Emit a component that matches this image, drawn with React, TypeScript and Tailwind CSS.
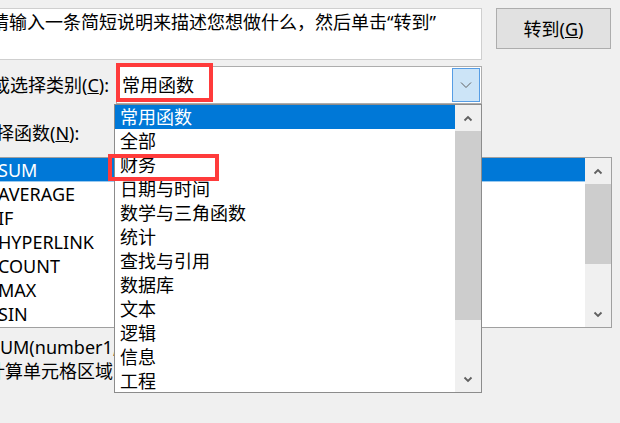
import React from "react";

const categories = [
  "常用函数",
  "全部",
  "财务",
  "日期与时间",
  "数学与三角函数",
  "统计",
  "查找与引用",
  "数据库",
  "文本",
  "逻辑",
  "信息",
  "工程",
];

const functions = ["SUM", "AVERAGE", "IF", "HYPERLINK", "COUNT", "MAX", "SIN"];

function ScrollArrow({ up }: { up?: boolean }) {
  return (
    <svg width="10" height="7" viewBox="0 0 10 7" className="block">
      <path
        d={up ? "M1.5 5.5 L5 2 L8.5 5.5" : "M1.5 1.5 L5 5 L8.5 1.5"}
        fill="none"
        stroke="#606060"
        strokeWidth="1.8"
      />
    </svg>
  );
}

function ScrollBar({ thumb }: { thumb: string }) {
  return (
    <div className="w-[26px] shrink-0 bg-[#f0f0f0] flex flex-col">
      <div className="h-[26px] flex items-center justify-center">
        <ScrollArrow up />
      </div>
      <div className={thumb + " bg-[#cdcdcd]"} />
      <div className="flex-1" />
      <div className="h-[26px] flex items-center justify-center">
        <ScrollArrow />
      </div>
    </div>
  );
}

export default function App() {
  return (
    <div className="relative w-[620px] h-[423px] overflow-hidden bg-[#f0f0f0] text-[18px] leading-[24px] text-black [font-family:'Noto_Sans','Noto_Sans_CJK_SC',sans-serif]">
      <div className="ml-[-24px] pt-[8px] flex flex-col">
        {/* search */}
        <div className="flex items-start">
          <div className="w-[506px] h-[52px] bg-white border border-[#cfcfcf] pl-[14px] pt-[1px] whitespace-nowrap overflow-hidden">
            请输入一条简短说明来描述您想做什么，然后单击“转到”
          </div>
          <button className="ml-[14px] w-[115px] h-[41px] bg-[#e1e1e1] border border-[#adadad] text-black">
            转到(<span className="underline">G</span>)
          </button>
        </div>

        {/* category */}
        <div className="mt-[6px] flex items-center h-[38px]">
          <div className="w-[140px] pl-[16px] whitespace-nowrap">
            或选择类别(<span className="underline">C</span>):
          </div>
          <div className="w-[366px] h-[38px] bg-white border border-[#adadad] p-[1px] flex items-center">
            <div className="flex-1 pl-[4px] whitespace-nowrap">常用函数</div>
            <div className="w-[28px] h-full bg-[#cce4f7] border border-[#569de5] flex items-center justify-center">
              <svg width="12" height="8" viewBox="0 0 12 8">
                <path d="M1 1.5 L6 6.5 L11 1.5" fill="none" stroke="#606060" strokeWidth="1" />
              </svg>
            </div>
          </div>
        </div>

        {/* function list */}
        <div className="mt-[17px] pl-[2px] h-[24px] whitespace-nowrap">
          选择函数(<span className="underline">N</span>):
        </div>
        <div className="mt-[12px] w-[636px] h-[171px] border border-[#a0a0a0] bg-white flex">
          <div className="flex-1 flex flex-col">
            {functions.map((f, i) => (
              <div
                key={f}
                className={
                  i === 0
                    ? "h-[24px] pl-[21px] bg-[#0078d7] text-white border-b border-[#99c9ef]"
                    : "h-[24px] pl-[21px]"
                }
              >
                {f}
              </div>
            ))}
          </div>
          <ScrollBar thumb="h-[80px]" />
        </div>

        <div className="mt-[7px] pl-[14px] whitespace-nowrap">SUM(number1,number2,...)</div>
        <div className="pl-[11px] whitespace-nowrap">计算单元格区域中所有数值的和</div>
      </div>

      {/* open dropdown */}
      <div className="absolute left-[114px] top-[104px] w-[368px] h-[289px] border border-[#8c8c8c] bg-white flex overflow-hidden">
        <div className="flex-1 flex flex-col">
          {categories.map((c, i) => (
            <div
              key={c}
              className={
                i === 0
                  ? "h-[24px] shrink-0 pl-[5px] bg-[#0078d7] text-white whitespace-nowrap"
                  : "h-[24px] shrink-0 pl-[5px] whitespace-nowrap"
              }
            >
              {c}
            </div>
          ))}
        </div>
        <ScrollBar thumb="h-[189px]" />
      </div>

      {/* annotations */}
      <div className="absolute left-[116px] top-[63px] w-[97px] h-[39px] border-4 border-[#ff3b3b]" />
      <div className="absolute left-[108px] top-[154px] w-[111px] h-[27px] border-4 border-[#ff3b3b]" />
    </div>
  );
}
